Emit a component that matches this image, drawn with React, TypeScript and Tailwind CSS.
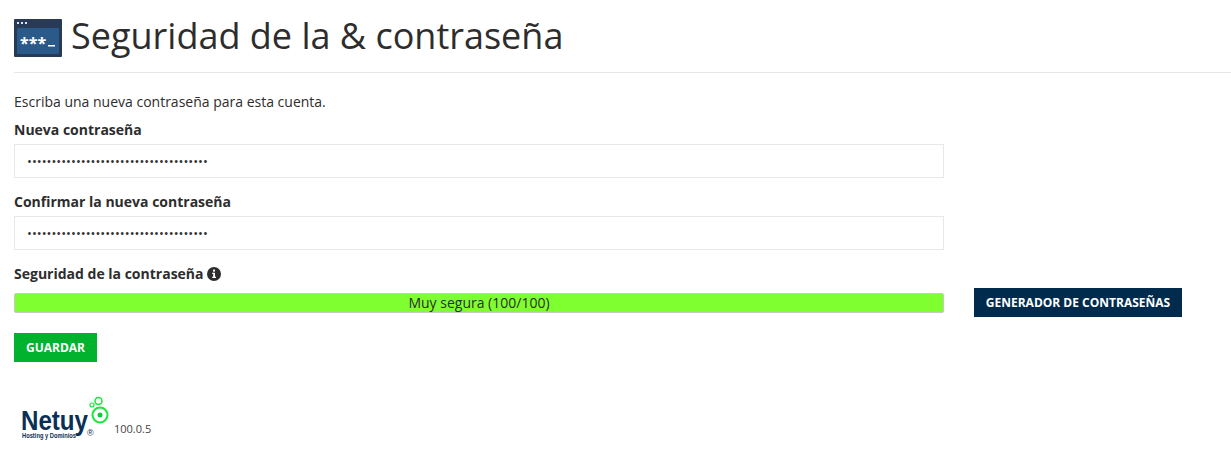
export default function App() {
  const font = { fontFamily: '"Open Sans", sans-serif' };
  return (
    <div style={font} className="w-[1231px] h-[460px] overflow-hidden bg-white pl-[14px] text-[14px] leading-[20px] text-[#2d2d2d]">
      <div className="flex items-center h-[73px] -mr-[14px] border-b border-[#e6e6e6]">
        <svg width="48" height="38" viewBox="0 0 48 38" className="mr-[9px] mt-[4px] shrink-0">
          <rect width="48" height="38" rx="1" fill="#293a56" />
          <rect x="3" y="9" width="42" height="26" rx="1.5" fill="#2a5a8a" />
          <rect x="3" y="3" width="2" height="2" fill="#dfe5ec" />
          <rect x="7" y="3" width="2" height="2" fill="#dfe5ec" />
          <rect x="11" y="3" width="2" height="2" fill="#dfe5ec" />
          <text x="6" y="30" fill="#ffffff" fontSize="16" fontWeight="700" fontFamily="Open Sans">***</text>
          <rect x="34" y="26" width="7" height="1.5" fill="#ffffff" />
        </svg>
        <h1 className="text-[36px] leading-[46px] font-normal text-[#2d2d2d]">Seguridad de la &amp; contraseña</h1>
      </div>

      <p className="mt-[19px] leading-[20px]">Escriba una nueva contraseña para esta cuenta.</p>

      <label className="block mt-[8px] font-bold leading-[20px]">Nueva contraseña</label>
      <input
        type="password"
        readOnly
        value="aaaaaaaaaaaaaaaaaaaaaaaaaaaaaaaaaaaaa"
        className="block mt-[4px] w-[930px] h-[34px] border border-[#e8e8e8] bg-white px-[12px] text-[13px] text-[#333] outline-none"
      />

      <label className="block mt-[14px] font-bold leading-[20px]">Confirmar la nueva contraseña</label>
      <input
        type="password"
        readOnly
        value="aaaaaaaaaaaaaaaaaaaaaaaaaaaaaaaaaaaaa"
        className="block mt-[4px] w-[930px] h-[34px] border border-[#e8e8e8] bg-white px-[12px] text-[13px] text-[#333] outline-none"
      />

      <div className="mt-[14px] flex items-center gap-[3px] font-bold leading-[20px]">
        <span>Seguridad de la contraseña</span>
        <svg width="14" height="14" viewBox="0 0 14 14">
          <circle cx="7" cy="7" r="7" fill="#2d2d2d" />
          <rect x="6" y="2.6" width="2" height="2" fill="#fff" />
          <path d="M5.2 5.8h2.8v4h1v1.3H5.2V9.8h1V7.1h-1z" fill="#fff" />
        </svg>
      </div>

      <div className="flex items-center mt-[4px]">
        <div className="w-[930px] h-[20px] border border-[#c8c8c8] rounded-[2px] bg-[#7fff2f] text-center leading-[18px] text-[14px]">
          Muy segura (100/100)
        </div>
        <button className="ml-[30px] w-[208px] h-[29px] bg-[#002b4d] text-white text-[12px] font-bold">
          GENERADOR DE CONTRASEÑAS
        </button>
      </div>

      <button className="block mt-[16px] w-[83px] h-[29px] bg-[#00b22d] text-white text-[12px] font-bold">
        GUARDAR
      </button>

      <div className="flex items-end mt-[33px]">
        <svg width="92" height="46" viewBox="0 0 92 46" className="ml-[6px] shrink-0">
          <text x="1" y="35" fill="#0b2f55" fontSize="27" fontWeight="700" fontFamily="Liberation Sans" textLength="67" lengthAdjust="spacingAndGlyphs">Netuy</text>
          <text x="2" y="43" fill="#0b2f55" fontSize="6.5" fontWeight="700" fontFamily="Liberation Sans" textLength="54" lengthAdjust="spacingAndGlyphs">Hosting y Dominios</text>
          <text x="67" y="41" fill="#0b2f55" fontSize="9" fontFamily="Liberation Sans">®</text>
          <circle cx="80" cy="20" r="7.5" fill="none" stroke="#19e83a" strokeWidth="2" />
          <circle cx="80" cy="20" r="2.5" fill="#19c83a" />
          <circle cx="78.5" cy="6" r="3.5" fill="none" stroke="#19e83a" strokeWidth="1.5" />
          <circle cx="72" cy="10" r="2" fill="none" stroke="#19e83a" strokeWidth="1.2" />
        </svg>
        <span className="ml-[2px] mb-[4px] text-[11px] leading-[16px] text-[#444]">100.0.5</span>
      </div>
    </div>
  );
}
